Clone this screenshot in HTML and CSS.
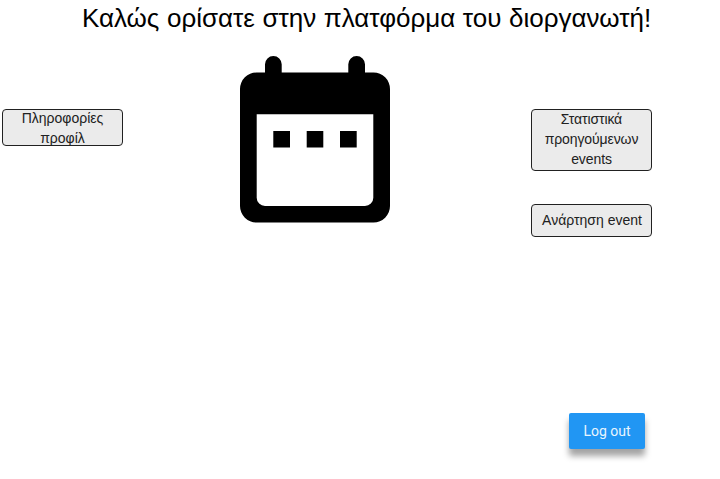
FILE: index.html
```html
<!DOCTYPE html>
<html lang="el">
<head>
<meta charset="utf-8">
<title>Πλατφόρμα διοργανωτή</title>
<link rel="stylesheet" href="styles.css">
</head>
<body>
<h1 class="title"><span>Καλώς ορίσατε στην πλατφόρμα του διοργανωτή!</span></h1>
<main class="board">
  <div class="side"><button class="action profile">Πληροφορίες προφίλ</button></div>
  <svg class="calendar" viewBox="0 0 151 167" aria-hidden="true">
    <path fill-rule="evenodd" d="M25 16.5V8.3a8.35 8.35 0 0 1 16.7 0v8.2h66.6V8.3a8.35 8.35 0 0 1 16.7 0v8.2h8.5A16.5 16.5 0 0 1 150 33v117a16.5 16.5 0 0 1-16.5 16.5h-117A16.5 16.5 0 0 1 0 150V33a16.5 16.5 0 0 1 16.5-16.5zM16.7 58.3v83.4a8.3 8.3 0 0 0 8.3 8.3h100a8.3 8.3 0 0 0 8.3-8.3V58.3z"/>
    <path d="M33.3 75H50v16.5H33.3zM66.7 75h16.6v16.5H66.7zM100 75h16.7v16.5H100z"/>
  </svg>
  <div class="side">
    <button class="action stats">Στατιστικά προηγούμενων events</button>
    <button class="action post">Ανάρτηση event</button>
  </div>
</main>
<footer class="footer"><button class="logout">Log out</button></footer>
</body>
</html>
```
FILE: styles.css
```css
* { box-sizing: border-box; }
body { margin: 0; background: #fff; width: 720px; height: 479px; overflow: hidden; font-family: "Liberation Sans", sans-serif; }
.title { margin: 0; padding-left: 82px; height: 55px; font-size: 26px; line-height: 36px; font-weight: 400; color: #000; white-space: nowrap; letter-spacing: -0.03px; word-spacing: 0.5px; }
.board { display: flex; height: 358px; padding-left: 2px; }
.side { width: 121px; padding-top: 54px; display: flex; flex-direction: column; gap: 33px; }
.action { display: flex; align-items: center; justify-content: center; width: 121px; padding: 0 8px; border: 1px solid #212121; border-radius: 4px; background: #ebebeb; color: #212121; font: 14px/20px "Liberation Sans", sans-serif; text-align: center; }
.profile { height: 37px; }
.stats { height: 62px; padding-bottom: 2px; letter-spacing: -0.1px; }
.post { height: 33px; padding-bottom: 2px; padding-left: 9px; white-space: nowrap; }
.calendar { width: 151px; height: 167px; margin: 0.5px 140px 0 117px; flex: none; overflow: visible; }
.footer { display: flex; justify-content: flex-end; padding-right: 75px; }
.logout { width: 76px; height: 36px; padding: 0; border: 0; border-radius: 2px; background: #2196f3; color: #e9f5fe; font: 14px/36px Roboto, sans-serif; box-shadow: 0 7px 6px rgba(0,0,0,.36); }
```
